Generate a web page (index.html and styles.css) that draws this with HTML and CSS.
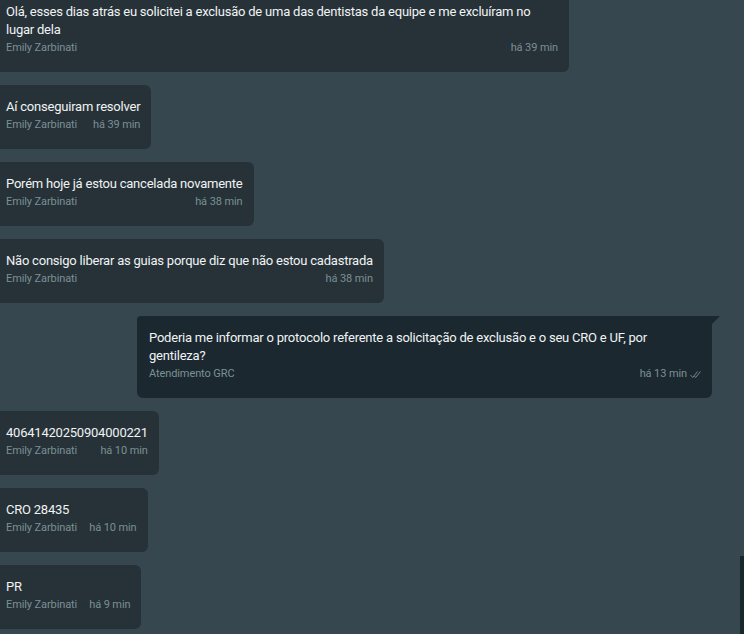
FILE: index.html
```html
<!DOCTYPE html>
<html lang="pt-BR">
<head>
<meta charset="utf-8">
<link rel="stylesheet" href="styles.css">
</head>
<body>
<div class="chat">
  <div class="msg in">
    <div class="text">Olá, esses dias atrás eu solicitei a exclusão de uma das dentistas da equipe e me excluíram no lugar dela</div>
    <div class="meta"><span>Emily Zarbinati</span><span>há 39 min</span></div>
  </div>
  <div class="msg in">
    <div class="text">Aí conseguiram resolver</div>
    <div class="meta"><span>Emily Zarbinati</span><span>há 39 min</span></div>
  </div>
  <div class="msg in">
    <div class="text">Porém hoje já estou cancelada novamente</div>
    <div class="meta"><span>Emily Zarbinati</span><span>há 38 min</span></div>
  </div>
  <div class="msg in">
    <div class="text">Não consigo liberar as guias porque diz que não estou cadastrada</div>
    <div class="meta"><span>Emily Zarbinati</span><span>há 38 min</span></div>
  </div>
  <div class="msg out">
    <div class="text">Poderia me informar o protocolo referente a solicitação de exclusão e o seu CRO e UF, por gentileza?</div>
    <div class="meta"><span>Atendimento GRC</span><span class="time">há 13 min <svg class="check" width="11" height="9" viewBox="0 0 11 9"><path d="M0.5 5 L2.8 7.5 L7.5 1.5 M4.6 6.2 L5.6 7.5 L10.5 1.5" fill="none" stroke="currentColor" stroke-width="0.9"/></svg></span></div>
  </div>
  <div class="msg in">
    <div class="text">40641420250904000221</div>
    <div class="meta"><span>Emily Zarbinati</span><span>há 10 min</span></div>
  </div>
  <div class="msg in">
    <div class="text">CRO 28435</div>
    <div class="meta"><span>Emily Zarbinati</span><span>há 10 min</span></div>
  </div>
  <div class="msg in">
    <div class="text">PR</div>
    <div class="meta"><span>Emily Zarbinati</span><span>há 9 min</span></div>
  </div>
</div>
<div class="scrollbar"></div>
</body>
</html>
```
FILE: styles.css
```css
html, body {
  margin: 0;
  padding: 0;
  height: 100%;
  overflow: hidden;
}
body {
  background: #37474f;
  font-family: Roboto, "Noto Sans", sans-serif;
  position: relative;
}
.chat {
  display: flex;
  flex-direction: column;
  gap: 13px;
  margin-top: -10px;
  padding-right: 32px;
}
.msg {
  box-sizing: border-box;
  max-width: 575px;
  padding: 13px 11px 15px 12px;
  border-radius: 6px;
  position: relative;
}
.msg.in {
  align-self: flex-start;
  background: #263238;
  margin-left: -6px;
}
.msg.out {
  align-self: flex-end;
  background: #1b282f;
  border-top-right-radius: 0;
  border-top-left-radius: 4px;
}
.msg.out::after {
  content: "";
  position: absolute;
  top: 0;
  right: -8px;
  border-top: 8px solid #1b282f;
  border-right: 8px solid transparent;
}
.text {
  color: #f1f3f4;
  font-size: 13px;
  line-height: 18px;
  letter-spacing: -0.22px;
}
.meta {
  display: flex;
  justify-content: space-between;
  gap: 12px;
  color: #7b9094;
  font-size: 11px;
  line-height: 18px;
  letter-spacing: -0.1px;
}
.time {
  display: inline-flex;
  align-items: center;
  gap: 3px;
}
.check {
  color: #7b9094;
}
.scrollbar {
  position: absolute;
  right: 0;
  top: 556px;
  width: 4px;
  height: 78px;
  background: #16282c;
}
```
